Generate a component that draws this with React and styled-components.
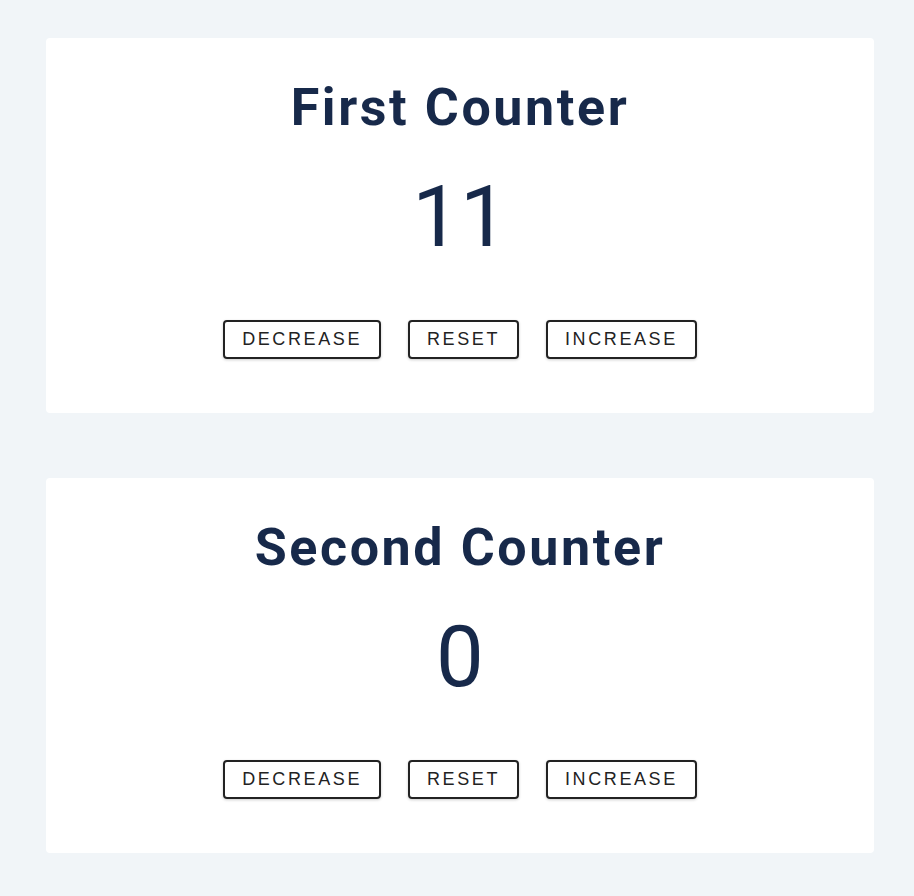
import React, { useState } from 'react';
import styled, { createGlobalStyle } from 'styled-components';

const GlobalStyle = createGlobalStyle`
  * {
    box-sizing: border-box;
    margin: 0;
    padding: 0;
  }

  body {
    background: #f1f5f8;
    font-family: Roboto, "Liberation Sans", sans-serif;
    color: #102a42;
  }
`;

const Page = styled.main`
  display: flex;
  flex-direction: column;
  gap: 65px;
  padding: 38px 40px 43px 46px;
`;

const Card = styled.section`
  background: #fff;
  border-radius: 4px;
  height: 375px;
  display: flex;
  flex-direction: column;
  align-items: center;
  padding-top: 44px;
`;

const Title = styled.h1`
  font-size: 52px;
  font-weight: 700;
  letter-spacing: 2.6px;
  line-height: 1;
  color: #17294a;
`;

const Value = styled.span`
  margin-top: 41px;
  font-size: 85px;
  font-weight: 400;
  line-height: 1;
  color: #17294a;
`;

const ButtonRow = styled.div`
  display: flex;
  gap: 27px;
  margin-top: 60px;
`;

const Button = styled.button`
  font-family: "Liberation Sans", Arial, sans-serif;
  font-size: 18px;
  letter-spacing: 2.6px;
  text-transform: uppercase;
  color: #222;
  background: transparent;
  border: 2px solid #222;
  border-radius: 4px;
  box-shadow: 0 1px 3px rgba(0, 0, 0, 0.2);
  height: 39px;
  padding: 0 17px;
  cursor: pointer;
`;

const Counter = ({ title, initial }) => {
  const [count, setCount] = useState(initial);

  return (
    <Card>
      <Title>{title}</Title>
      <Value>{count}</Value>
      <ButtonRow>
        <Button onClick={() => setCount(count - 1)}>decrease</Button>
        <Button onClick={() => setCount(0)}>reset</Button>
        <Button onClick={() => setCount(count + 1)}>increase</Button>
      </ButtonRow>
    </Card>
  );
};

export default function App() {
  return (
    <>
      <GlobalStyle />
      <Page>
        <Counter title="First Counter" initial={11} />
        <Counter title="Second Counter" initial={0} />
      </Page>
    </>
  );
}
